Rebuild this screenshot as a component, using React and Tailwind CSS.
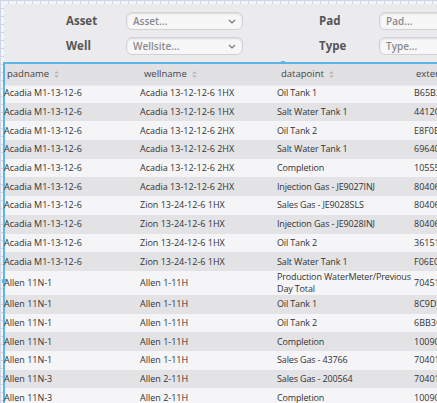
import React from 'react';

const rows = [
  ['Acadia M1-13-12-6', 'Acadia 13-12-12-6 1HX', 'Oil Tank 1', 'B65B3'],
  ['Acadia M1-13-12-6', 'Acadia 13-12-12-6 1HX', 'Salt Water Tank 1', '4412C'],
  ['Acadia M1-13-12-6', 'Acadia 13-12-12-6 2HX', 'Oil Tank 2', 'E8F0E'],
  ['Acadia M1-13-12-6', 'Acadia 13-12-12-6 2HX', 'Salt Water Tank 1', '69640'],
  ['Acadia M1-13-12-6', 'Acadia 13-12-12-6 2HX', 'Completion', '10555'],
  ['Acadia M1-13-12-6', 'Acadia 13-12-12-6 2HX', 'Injection Gas - JE9027INJ', '80406'],
  ['Acadia M1-13-12-6', 'Zion 13-24-12-6 1HX', 'Sales Gas - JE9028SLS', '80406'],
  ['Acadia M1-13-12-6', 'Zion 13-24-12-6 1HX', 'Injection Gas - JE9028INJ', '80406'],
  ['Acadia M1-13-12-6', 'Zion 13-24-12-6 1HX', 'Oil Tank 2', '36151'],
  ['Acadia M1-13-12-6', 'Zion 13-24-12-6 1HX', 'Salt Water Tank 1', 'F06E0'],
  ['Allen 11N-1', 'Allen 1-11H', 'Production WaterMeter/Previous\nDay Total', '70451'],
  ['Allen 11N-1', 'Allen 1-11H', 'Oil Tank 1', '8C9D7'],
  ['Allen 11N-1', 'Allen 1-11H', 'Oil Tank 2', '6BB3C'],
  ['Allen 11N-1', 'Allen 1-11H', 'Completion', '10090'],
  ['Allen 11N-1', 'Allen 1-11H', 'Sales Gas - 43766', '70401'],
  ['Allen 11N-3', 'Allen 2-11H', 'Sales Gas - 200564', '70401'],
  ['Allen 11N-3', 'Allen 2-11H', 'Completion', '10090'],
];

const SortIcon = () => (
  <svg width="7" height="9" viewBox="0 0 7 9" className="ml-[4px] inline-block">
    <path d="M1.2 3.6 L3.5 1.2 L5.8 3.6 Z" fill="#b0b0b6" />
    <path d="M1.2 5.4 L3.5 7.8 L5.8 5.4 Z" fill="#b0b0b6" />
  </svg>
);

const Chevron = () => (
  <svg width="8" height="5" viewBox="0 0 8 5">
    <path d="M1 1 L4 4 L7 1" fill="none" stroke="#777" strokeWidth="1.2" />
  </svg>
);

function Field({ label, placeholder, select }) {
  return (
    <div className="flex items-center">
      <div className="w-[60px] text-[11.5px] font-bold text-[#555]">{label}</div>
      <div className="w-[117px] h-[18px] shrink-0 rounded-[6px] border border-[#d2d2d4] bg-[#f7f7f7] shadow-[inset_0_1px_2px_rgba(0,0,0,0.12)] flex items-center justify-between pl-[6px] pr-[6px]">
        <span className="text-[10px] font-semibold text-[#8a8a8e]">{placeholder}</span>
        {select && <Chevron />}
      </div>
    </div>
  );
}

export default function App() {
  return (
    <div
      className="w-[437px] h-[403px] overflow-hidden bg-[#f3f4f8] bg-[linear-gradient(to_right,#cdd5e6_1px,transparent_1px),linear-gradient(to_bottom,#cdd5e6_1px,transparent_1px)] bg-[size:8px_8px] pt-[4px] pl-[4px]"
      style={{ fontFamily: '"Open Sans", "Noto Sans", sans-serif' }}
    >
      {/* filters */}
      <div className="w-[600px] h-[58px] bg-[#ebebee] pl-[62px] pt-[8px] flex flex-col gap-[7px]">
        <div className="flex">
          <Field label="Asset" placeholder="Asset..." select />
          <div className="w-[76px] shrink-0" />
          <Field label="Pad" placeholder="Pad..." />
        </div>
        <div className="flex">
          <Field label="Well" placeholder="Wellsite..." select />
          <div className="w-[76px] shrink-0" />
          <Field label="Type" placeholder="Type..." />
        </div>
      </div>

      {/* table */}
      <div className="relative -ml-[1px] w-[600px] border-t-2 border-l-2 border-[#5bb7ea] bg-[#f5f5f7]">
        <div className="absolute -top-[3px] left-[276px] w-[4px] h-[4px] bg-[#5bb7ea]" />
        <div className="absolute top-[215px] -left-[3px] w-[4px] h-[4px] bg-[#5bb7ea]" />
        <div className="flex h-[20px] items-center bg-[#e1e1e4] text-[9.5px] text-[#444] shadow-[0_1px_2px_rgba(0,0,0,0.12)] relative">
          <div className="w-[137px] shrink-0 pl-[2px] flex items-center">padname<SortIcon /></div>
          <div className="w-[137px] shrink-0 pl-[2px] flex items-center">wellname<SortIcon /></div>
          <div className="w-[137px] shrink-0 pl-[2px] flex items-center">datapoint<SortIcon /></div>
          <div className="w-[137px] shrink-0 flex items-center">external</div>
        </div>
        {rows.map((r, i) => (
          <div
            key={i}
            className={`flex items-center min-h-[18.7px] text-[9px] leading-[12px] text-[#333] ${
              i % 2 === 0 ? 'bg-[#f5f5f7]' : 'bg-[#e3e3e6]'
            }`}
          >
            <div className="w-[136px] shrink-0 -ml-[1px]">{r[0]}</div>
            <div className="w-[137px] shrink-0">{r[1]}</div>
            <div className="w-[137px] shrink-0 whitespace-pre tracking-[-0.15px]">{r[2]}</div>
            <div className="w-[137px] shrink-0">{r[3]}</div>
          </div>
        ))}
      </div>
    </div>
  );
}
